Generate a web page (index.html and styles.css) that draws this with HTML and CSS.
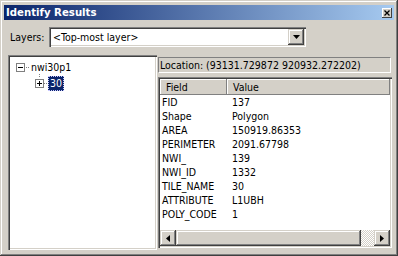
FILE: index.html
```html
<!DOCTYPE html>
<html>
<head>
<meta charset="utf-8">
<link rel="stylesheet" href="styles.css">
</head>
<body>
<div class="window">
  <div class="titlebar">
    <span class="title">Identify Results</span>
    <span class="close">
      <svg width="10" height="10" viewBox="0 0 10 10"><path d="M2.5 2.5 L7.5 7.5 M7.5 2.5 L2.5 7.5" stroke="#000" stroke-width="1.3" fill="none"/></svg>
    </span>
  </div>
  <div class="layers-row">
    <span class="lbl">Layers:</span>
    <div class="combo">
      <span class="combo-text">&lt;Top-most layer&gt;</span>
      <span class="combo-btn">
        <svg width="7" height="4" viewBox="0 0 7 4"><path d="M0 0 H7 L3.5 4 Z" fill="#000"/></svg>
      </span>
    </div>
  </div>
  <div class="main">
    <div class="tree">
      <div class="node">
        <span class="exp">
          <svg width="9" height="9" viewBox="0 0 9 9"><rect x="0.5" y="0.5" width="8" height="8" fill="#fff" stroke="#808080"/><path d="M2 4.5 H7" stroke="#000"/></svg>
        </span>
        <span class="hline"></span>
        <span class="label">nwi30p1</span>
      </div>
      <div class="node child">
        <span class="exp exp-child">
          <svg width="9" height="9" viewBox="0 0 9 9"><rect x="0.5" y="0.5" width="8" height="8" fill="#fff" stroke="#808080"/><path d="M2 4.5 H7 M4.5 2 V7" stroke="#000"/></svg>
        </span>
        <span class="hline hline-child"></span>
        <span class="label sel">30</span>
      </div>
    </div>
    <div class="right">
      <div class="location">Location: (93131.729872 920932.272202)</div>
      <div class="grid">
        <div class="head">
          <div class="hc hc-field">Field</div>
          <div class="hc hc-value">Value</div>
        </div>
        <div class="rows">
          <div class="row"><span class="f">FID</span><span class="v">137</span></div>
          <div class="row"><span class="f">Shape</span><span class="v">Polygon</span></div>
          <div class="row"><span class="f">AREA</span><span class="v">150919.86353</span></div>
          <div class="row"><span class="f">PERIMETER</span><span class="v">2091.67798</span></div>
          <div class="row"><span class="f">NWI_</span><span class="v">139</span></div>
          <div class="row"><span class="f">NWI_ID</span><span class="v">1332</span></div>
          <div class="row"><span class="f">TILE_NAME</span><span class="v">30</span></div>
          <div class="row"><span class="f">ATTRIBUTE</span><span class="v">L1UBH</span></div>
          <div class="row"><span class="f">POLY_CODE</span><span class="v">1</span></div>
        </div>
        <div class="hscroll">
          <span class="sbtn">
            <svg width="4" height="7" viewBox="0 0 4 7"><path d="M4 0 V7 L0 3.5 Z" fill="#000"/></svg>
          </span>
          <span class="thumb"></span>
          <span class="track"></span>
          <span class="sbtn">
            <svg width="4" height="7" viewBox="0 0 4 7"><path d="M0 0 V7 L4 3.5 Z" fill="#000"/></svg>
          </span>
        </div>
      </div>
    </div>
  </div>
</div>
</body>
</html>
```
FILE: styles.css
```css
* { box-sizing: border-box; }
body {
  margin: 0;
  width: 398px;
  height: 256px;
  overflow: hidden;
  background: #d4d0c8;
  font-family: "DejaVu Sans Condensed", "Liberation Sans", sans-serif;
  font-size: 10.5px;
  color: #000;
}
.window {
  width: 398px;
  height: 256px;
  background: #d4d0c8;
  box-shadow: inset -1px -1px #404040, inset 1px 1px #d4d0c8, inset -2px -2px #808080, inset 2px 2px #fff;
  padding: 5px 4px 0 4px;
  display: flex;
  flex-direction: column;
}
.titlebar {
  height: 15px;
  display: flex;
  align-items: center;
  justify-content: space-between;
  background: linear-gradient(to right, #0a246a, #a6caf0);
  padding: 0 2px 0 2px;
}
.title {
  color: #fff;
  font-weight: bold;
  font-size: 11.3px;
  line-height: 15px;
}
.close {
  width: 10px;
  height: 10px;
  background: #d4d0c8;
  box-shadow: inset -1px -1px #404040, inset 1px 1px #fff;
  display: flex;
}
.layers-row {
  margin-top: 7px;
  height: 20px;
  display: flex;
  align-items: center;
  padding-left: 6px;
}
.lbl { width: 39px; }
.combo {
  width: 257px;
  height: 20px;
  background: #fff;
  box-shadow: inset 1px 1px #808080, inset 2px 2px #404040, inset -1px -1px #fff, inset -2px -2px #d4d0c8;
  display: flex;
  align-items: center;
  justify-content: space-between;
  padding: 2px;
}
.combo-text { padding-left: 2px; }
.combo-btn {
  width: 16px;
  height: 16px;
  background: #d4d0c8;
  box-shadow: inset -1px -1px #404040, inset 1px 1px #d4d0c8, inset -2px -2px #808080, inset 2px 2px #fff;
  display: flex;
  align-items: center;
  justify-content: center;
}
.main {
  margin-top: 8px;
  display: flex;
  gap: 1px;
  padding-left: 4px;
}
.tree {
  width: 149px;
  height: 195px;
  background: #fff;
  box-shadow: inset 1px 1px #808080, inset 2px 2px #404040, inset -1px -1px #fff, inset -2px -2px #d4d0c8;
  padding: 4px 2px 2px 8px;
}
.node {
  height: 16px;
  display: flex;
  align-items: center;
}
.exp { width: 9px; height: 9px; display: flex; position: relative; }
.exp-child { margin-left: 19px; }
.exp-child::before {
  content: "";
  position: absolute;
  left: 4px;
  top: -5px;
  width: 1px;
  height: 4px;
  background-image: linear-gradient(to bottom, #808080 50%, transparent 50%);
  background-size: 1px 2px;
}
.hline {
  width: 4px;
  height: 1px;
  margin: 0 1px;
  background-image: linear-gradient(to right, #808080 50%, transparent 50%);
  background-size: 2px 1px;
}
.hline-child { margin: 0; }
.label { line-height: 15px; }
.sel {
  background: #0a246a;
  color: #fff;
  padding: 0 1px;
  height: 15px;
  border: 1px dotted #c8c8ff;
  line-height: 13px;
}
.right {
  width: 234px;
  display: flex;
  flex-direction: column;
}
.location {
  margin-top: 2px;
  margin-right: 1px;
  height: 16px;
  border-top: 1px solid #808080;
  border-left: 1px solid #808080;
  border-bottom: 1px solid #fff;
  border-right: 1px solid #fff;
  padding-left: 1px;
  line-height: 14px;
  white-space: nowrap;
}
.grid {
  margin-top: 4px;
  height: 171px;
  background: #fff;
  box-shadow: inset 1px 1px #808080, inset 2px 2px #404040, inset -1px -1px #fff, inset -2px -2px #d4d0c8;
  padding: 2px;
  display: flex;
  flex-direction: column;
}
.head { height: 16px; display: flex; flex: none; }
.hc {
  background: #d4d0c8;
  box-shadow: inset -1px -1px #808080, inset 1px 1px #fff;
  line-height: 16px;
  padding-left: 6px;
}
.hc-field { width: 67px; }
.hc-value { flex: 1; }
.rows { flex: 1; }
.row { height: 14px; display: flex; align-items: center; }
.f { width: 67px; padding-left: 2px; }
.v { padding-left: 5px; }
.hscroll { height: 16px; display: flex; flex: none; }
.sbtn {
  width: 16px;
  height: 16px;
  background: #d4d0c8;
  box-shadow: inset -1px -1px #404040, inset 1px 1px #d4d0c8, inset -2px -2px #808080, inset 2px 2px #fff;
  display: flex;
  align-items: center;
  justify-content: center;
}
.thumb {
  width: 185px;
  height: 16px;
  background: #d4d0c8;
  box-shadow: inset -1px -1px #404040, inset 1px 1px #d4d0c8, inset -2px -2px #808080, inset 2px 2px #fff;
}
.track {
  flex: 1;
  height: 16px;
  background: repeating-conic-gradient(#fff 0 25%, #d4d0c8 0 50%) 0 0 / 2px 2px;
}
```
